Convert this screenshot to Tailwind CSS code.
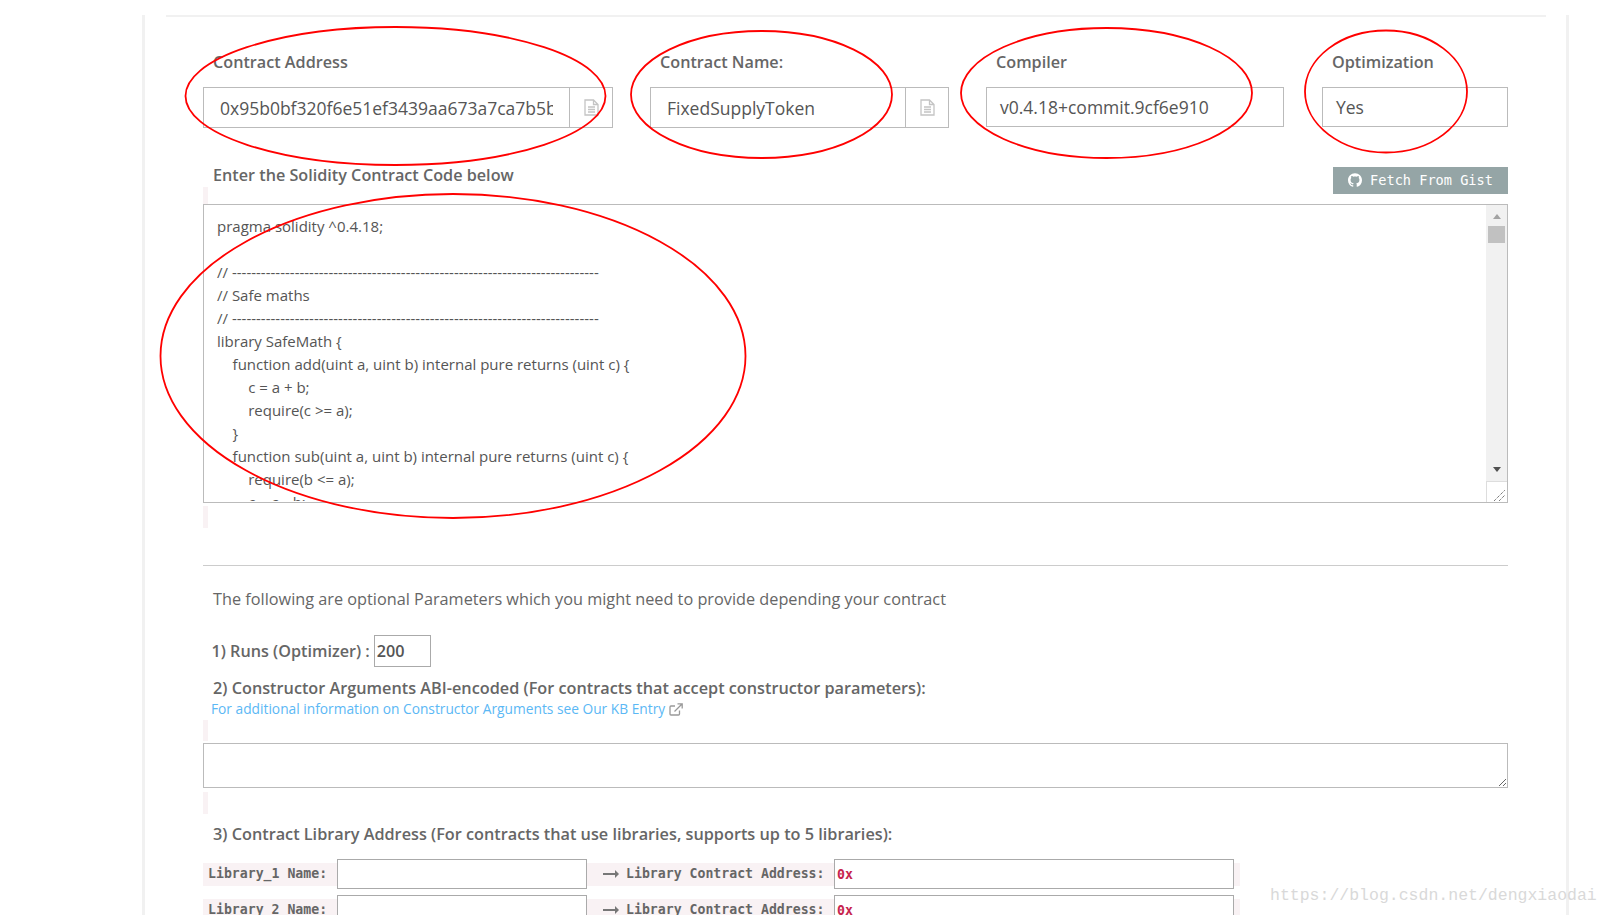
<!DOCTYPE html>
<html lang="en">
<head>
    <meta charset="UTF-8">
    <title>Verify Contract Code</title>
    <script src="https://cdn.jsdelivr.net/npm/@tailwindcss/browser@4"></script>
</head>
<body class="relative h-[915px] overflow-hidden bg-white font-['Open_Sans',sans-serif] text-[#666]">

    <!-- Card -->
    <div class="ml-[142px] h-[915px] w-[1427px] border-x-[3px] border-[#f1f1f1]">
        <div class="mt-[15px] ml-[21px] h-[2px] w-[1380px] bg-[#f1f1f1]"></div>

        <div class="ml-[58px] w-[1305px]">

            <!-- Contract fields -->
            <div class="flex pt-[33px]">
                <div class="w-[410px]">
                    <label class="mb-[13px] block h-[24px] pl-[10px] text-[16.2px] leading-[24px] font-semibold">Contract Address</label>
                    <div class="flex h-[41px] border border-[#bbb]">
                        <input class="w-[365px] px-[16px] pt-[1px] text-[17.5px] text-[#555] outline-none" value="0x95b0bf320f6e51ef3439aa673a7ca7b5b8d1f9c3">
                        <span class="flex flex-1 items-center justify-center border-l border-[#bbb]">
                            <svg width="15" height="17" viewBox="0 0 15 17" fill="none" stroke="#c4c4c4" stroke-width="1.3"><path d="M1 1h8.5L14 5.5V16H1zM9.5 1v4.5H14"/><path d="M4 8h7M4 10.5h7M4 13h7"/></svg>
                        </span>
                    </div>
                </div>
                <div class="ml-[37px] w-[299px]">
                    <label class="mb-[13px] block h-[24px] pl-[10px] text-[16.2px] leading-[24px] font-semibold">Contract Name:</label>
                    <div class="flex h-[41px] border border-[#bbb]">
                        <input class="w-[254px] px-[16px] pt-[1px] text-[17.5px] text-[#555] outline-none" value="FixedSupplyToken">
                        <span class="flex flex-1 items-center justify-center border-l border-[#bbb]">
                            <svg width="15" height="17" viewBox="0 0 15 17" fill="none" stroke="#c4c4c4" stroke-width="1.3"><path d="M1 1h8.5L14 5.5V16H1zM9.5 1v4.5H14"/><path d="M4 8h7M4 10.5h7M4 13h7"/></svg>
                        </span>
                    </div>
                </div>
                <div class="ml-[37px] w-[298px]">
                    <label class="mb-[13px] block h-[24px] pl-[10px] text-[16.2px] leading-[24px] font-semibold">Compiler</label>
                    <div class="flex h-[40px] items-center border border-[#bbb] pl-[13px] text-[17.5px] text-[#555]">v0.4.18+commit.9cf6e910</div>
                </div>
                <div class="ml-[38px] w-[186px]">
                    <label class="mb-[13px] block h-[24px] pl-[10px] text-[16.2px] leading-[24px] font-semibold">Optimization</label>
                    <div class="flex h-[40px] items-center border border-[#bbb] pl-[13px] text-[17.5px] text-[#555]">Yes</div>
                </div>
            </div>

            <!-- Source code -->
            <div class="mt-[39px] flex h-[37px] justify-between">
                <div class="flex flex-col justify-between">
                    <label class="-mt-[4px] block h-[24px] pl-[10px] text-[16.2px] leading-[24px] font-semibold">Enter the Solidity Contract Code below</label>
                    <div class="h-[22px] w-[5px] bg-[#f9f2f4]"></div>
                </div>
                <button class="flex h-[27px] w-[175px] items-center justify-center gap-[8px] bg-[#95a5a6] font-['DejaVu_Sans_Mono',monospace] text-[13.6px] text-white">
                    <svg class="-mt-[1px]" width="14" height="14" viewBox="0 0 24 24" fill="#fff"><path d="M12 .297c-6.63 0-12 5.373-12 12 0 5.303 3.438 9.8 8.205 11.385.6.113.82-.258.82-.577 0-.285-.01-1.04-.015-2.04-3.338.724-4.042-1.61-4.042-1.61C4.422 18.07 3.633 17.7 3.633 17.7c-1.087-.744.084-.729.084-.729 1.205.084 1.838 1.236 1.838 1.236 1.07 1.835 2.809 1.305 3.495.998.108-.776.417-1.305.76-1.605-2.665-.3-5.466-1.332-5.466-5.93 0-1.31.465-2.38 1.235-3.22-.135-.303-.54-1.523.105-3.176 0 0 1.005-.322 3.3 1.23.96-.267 1.98-.399 3-.405 1.02.006 2.04.138 3 .405 2.28-1.552 3.285-1.23 3.285-1.23.645 1.653.24 2.873.12 3.176.765.84 1.23 1.91 1.23 3.22 0 4.61-2.805 5.625-5.475 5.92.42.36.81 1.096.81 2.22 0 1.606-.015 2.896-.015 3.286 0 .315.21.69.825.57C20.565 22.092 24 17.592 24 12.297c0-6.627-5.373-12-12-12"/></svg>
                    Fetch From Gist
                </button>
            </div>
            <div class="flex h-[299px] border border-[#bbb]">
                <div class="h-[296px] flex-1 overflow-hidden pt-[10px] pl-[13px] text-[15px] leading-[23px] whitespace-pre text-[#555]">pragma solidity ^0.4.18;

// ----------------------------------------------------------------------------
// Safe maths
// ----------------------------------------------------------------------------
library SafeMath {
    function add(uint a, uint b) internal pure returns (uint c) {
        c = a + b;
        require(c &gt;= a);
    }
    function sub(uint a, uint b) internal pure returns (uint c) {
        require(b &lt;= a);
        c = a - b;
    }</div>
                <div class="flex w-[21px] flex-col">
                    <div class="flex flex-1 flex-col items-center bg-[#f1f1f1]">
                        <div class="mt-[9px] h-0 w-0 border-x-[4px] border-b-[5px] border-x-transparent border-b-[#a3a3a3]"></div>
                        <div class="mt-[7px] h-[17px] w-[17px] bg-[#c1c1c1]"></div>
                        <div class="mt-auto mb-[9px] h-0 w-0 border-x-[4px] border-t-[5px] border-x-transparent border-t-[#505050]"></div>
                    </div>
                    <div class="relative h-[21px] border-t border-l border-[#ddd] bg-white">
                        <svg class="absolute right-[2px] bottom-[1px]" width="11" height="11" viewBox="0 0 11 11" stroke="#444" stroke-width="1" stroke-dasharray="1 1"><path d="M0 11 11 0M5 11l6-6"/></svg>
                    </div>
                </div>
            </div>
            <div class="mt-[3px] h-[22px] w-[5px] bg-[#f9f2f4]"></div>

            <div class="mt-[37px] h-px bg-[#ccc]"></div>

            <!-- Optional parameters -->
            <p class="mt-[21px] pl-[10px] text-[16.27px] leading-[24px]">The following are optional Parameters which you might need to provide depending your contract</p>

            <div class="mt-[24px] flex h-[32px] items-center pl-[8.5px] text-[16.2px] font-semibold">
                <span>1) Runs (Optimizer) :</span>
                <input class="ml-[4px] h-[32px] w-[57px] border border-[#aaa] pl-[2px] font-semibold text-[#555] outline-none" value="200">
            </div>

            <h4 class="mt-[9px] pl-[10px] text-[16.25px] leading-[24px] font-semibold">2) Constructor Arguments ABI-encoded (For contracts that accept constructor parameters):</h4>
            <a class="flex h-[18px] items-center gap-[4px] pl-[8px] text-[13.75px] leading-[18px] text-[#5bb8f5]" href="#">
                For additional information on Constructor Arguments see Our KB Entry
                <svg width="14" height="13" viewBox="0 0 14 13" fill="none" stroke="#999" stroke-width="1.3"><path d="M10.5 7.5V11a1 1 0 0 1-1 1H2a1 1 0 0 1-1-1V4a1 1 0 0 1 1-1h4"/><path d="M5.5 8.5 13 1M8.5 .8H13.2V5.5"/></svg>
            </a>
            <div class="mt-[2px] h-[21px] w-[5px] bg-[#f9f2f4]"></div>
            <textarea class="mt-[2px] block h-[45px] w-full resize border border-[#bbb] outline-none"></textarea>
            <div class="mt-[4px] h-[22px] w-[5px] bg-[#f9f2f4]"></div>

            <h4 class="mt-[8px] pl-[10px] text-[16.25px] leading-[24px] font-semibold">3) Contract Library Address (For contracts that use libraries, supports up to 5 libraries):</h4>

            <!-- Libraries -->
            <div class="mt-[13px] flex h-[30px] items-center font-['DejaVu_Sans_Mono',monospace] text-[13.2px] font-bold">
                <span class="flex h-[23px] w-[134px] items-center bg-[#f9f2f4] pl-[5px]">Library_1 Name:</span>
                <input class="h-[30px] w-[250px] border border-[#aaa] outline-none">
                <span class="flex h-[23px] w-[247px] items-center gap-[7px] bg-[#f9f2f4] pl-[16px]">
                    <svg width="16" height="8" viewBox="0 0 16 8" fill="#777"><path d="M0 3h12V0l4 4-4 4V5H0z"/></svg>
                    Library Contract Address:
                </span>
                <input class="h-[30px] w-[400px] border border-[#aaa] pl-[2px] text-[#c7254e] outline-none" value="0x">
                <span class="h-[23px] w-[6px] bg-[#f9f2f4]"></span>
            </div>
            <div class="mt-[6px] flex h-[30px] items-center font-['DejaVu_Sans_Mono',monospace] text-[13.2px] font-bold">
                <span class="flex h-[23px] w-[134px] items-center bg-[#f9f2f4] pl-[5px]">Library_2 Name:</span>
                <input class="h-[30px] w-[250px] border border-[#aaa] outline-none">
                <span class="flex h-[23px] w-[247px] items-center gap-[7px] bg-[#f9f2f4] pl-[16px]">
                    <svg width="16" height="8" viewBox="0 0 16 8" fill="#777"><path d="M0 3h12V0l4 4-4 4V5H0z"/></svg>
                    Library Contract Address:
                </span>
                <input class="h-[30px] w-[400px] border border-[#aaa] pl-[2px] text-[#c7254e] outline-none" value="0x">
                <span class="h-[23px] w-[6px] bg-[#f9f2f4]"></span>
            </div>
        </div>
    </div>

    <!-- Red annotations drawn over the screenshot -->
    <svg class="pointer-events-none absolute inset-0" width="1611" height="915" fill="none" stroke="#f00" stroke-width="1.8">
        <ellipse cx="395.5" cy="96" rx="210" ry="69"/>
        <ellipse cx="761.5" cy="94.5" rx="130.5" ry="63.5"/>
        <ellipse cx="1106.5" cy="93" rx="145.5" ry="65"/>
        <ellipse cx="1386" cy="91.5" rx="81" ry="61"/>
        <ellipse cx="453" cy="356" rx="292.5" ry="162"/>
    </svg>

    <!-- Blog watermark -->
    <div class="absolute top-[885px] left-[1270px] font-['Liberation_Mono',monospace] text-[16.5px] leading-[22px] text-[#d9d9d9]">https://blog.csdn.net/dengxiaodai</div>
</body>
</html>
